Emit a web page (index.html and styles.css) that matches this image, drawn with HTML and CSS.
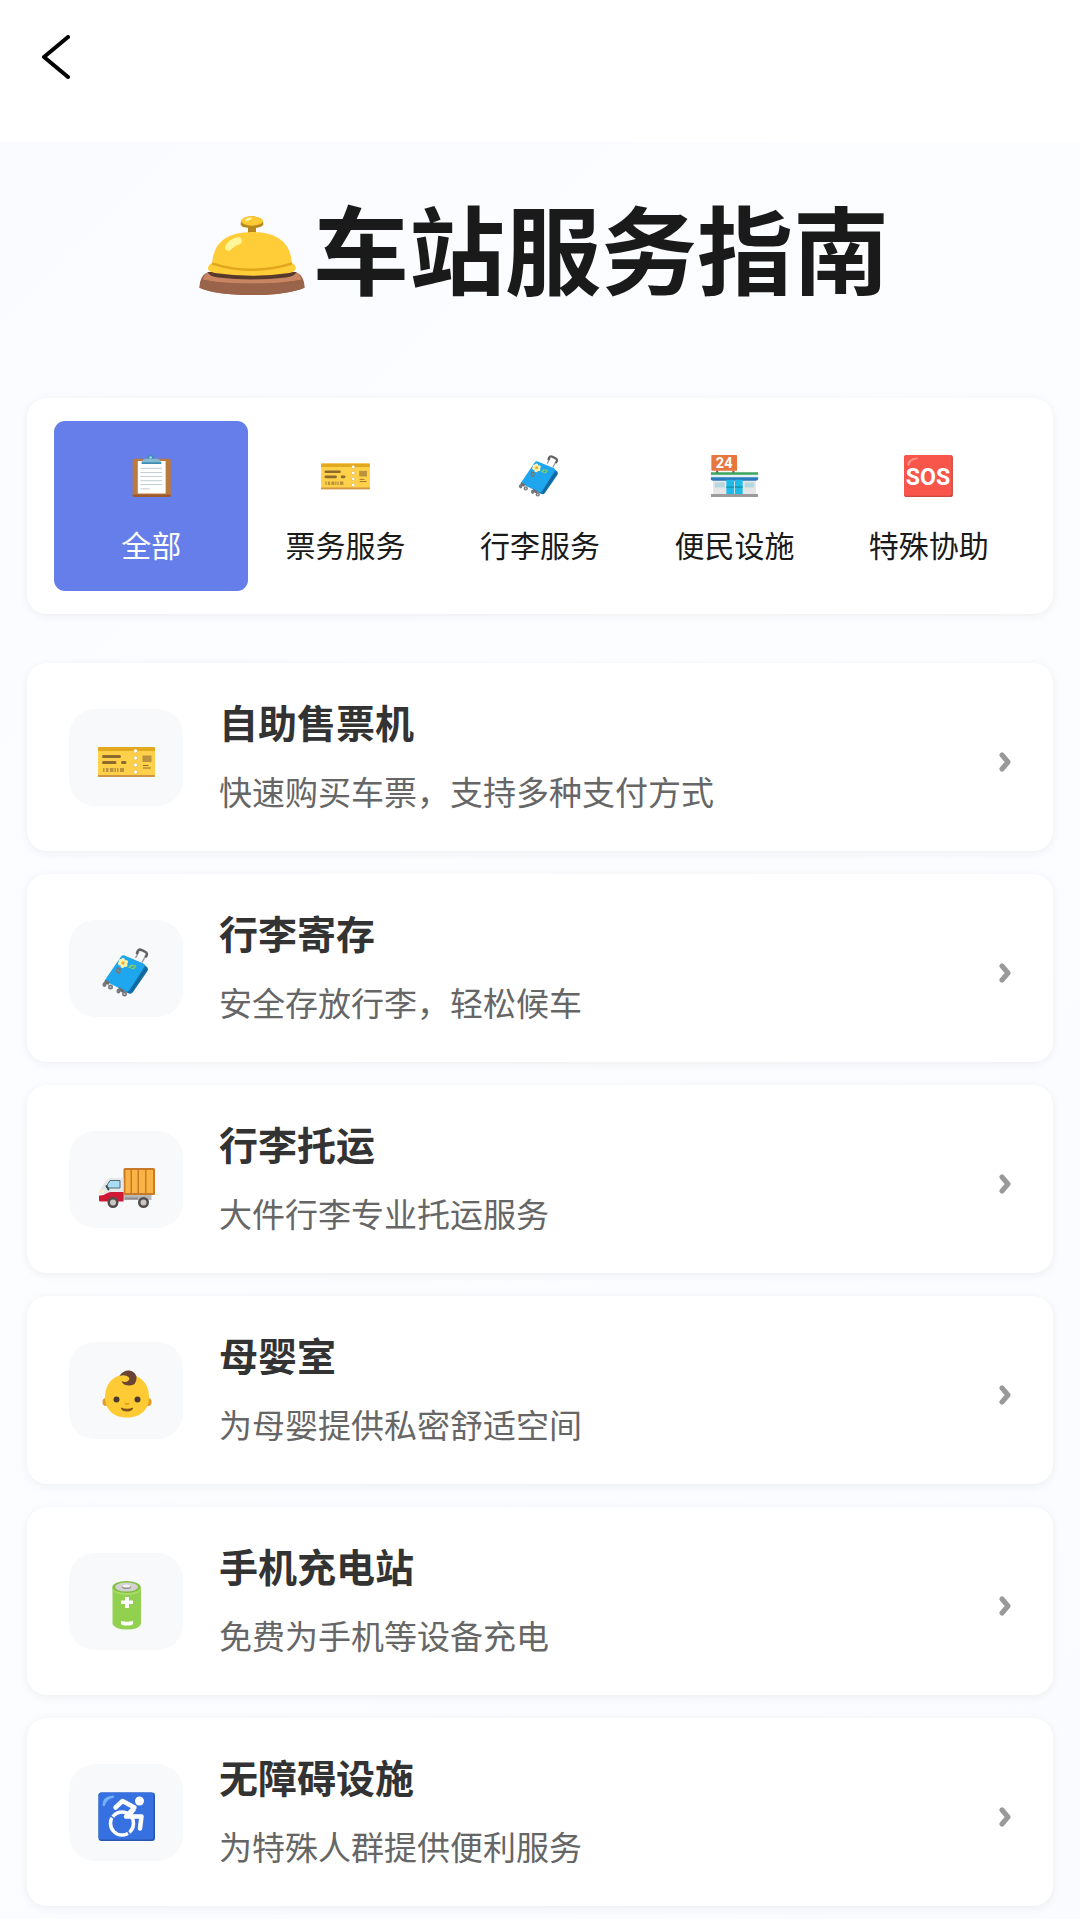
FILE: index.html
```html
<!DOCTYPE html>
<html lang="zh-CN">
<head>
    <meta charset="UTF-8">
    <meta name="viewport" content="width=device-width, initial-scale=1.0">
    <title>车站服务指南</title>
    <link rel="stylesheet" href="styles.css">
</head>
<body>
    <!-- shared icons -->
    <svg class="sprite" aria-hidden="true">
        <symbol id="ticket" viewBox="0 0 114 98">
            <rect x="0" y="20" width="114" height="60" rx="2" fill="#ffd04a"/>
            <path d="M0 22q0-2 2-2h110q2 0 2 2v6H0z" fill="#e2a91f"/>
            <path d="M0 76h114v2q0 2-2 2H2q-2 0-2-2z" fill="#cf9544"/>
            <path d="M11 39h32M11 51h23M49 51h5" stroke="#8b6a2b" stroke-width="6" stroke-linecap="round"/>
            <path d="M10 66h3M16 66h5M24 66h7M33 66h3M38 66h3M44 66h8" stroke="#b8923c" stroke-width="8"/>
            <path d="M89 37h18v13H89z" fill="#b8923c"/>
            <path d="M90 57h11M90 62h16" stroke="#8b6a2b" stroke-width="2"/>
            <g fill="#fff" stroke="#d39a3a" stroke-width="1">
                <circle cx="75" cy="28" r="4"/>
                <circle cx="75" cy="42" r="4"/>
                <circle cx="75" cy="56" r="4"/>
                <circle cx="75" cy="70" r="4"/>
            </g>
        </symbol>
        <symbol id="luggage" viewBox="0 0 114 98">
            <path d="M75 20l7-13M88 29l8-15" stroke="#9a9a9a" stroke-width="3"/>
            <path d="M78 10q2-9 9-6l8 4q5 3 1 9" fill="none" stroke="#616161" stroke-width="5" stroke-linecap="round"/>
            <path d="M92 33l7 6q2 3 0 7L70 88q-3 5-8 3l-10-4z" fill="#1472ab"/>
            <path d="M96 42L66 87" stroke="#0d5a8c" stroke-width="2"/>
            <path d="M46 17q3-4 7-2l38 16q4 2 2 6L63 84q-3 5-8 3L18 68q-5-2-2-7z" fill="#1ea7ef"/>
            <path d="M14 63l10 5-3 6-9-4zM42 78l11 6-1 7-11-6z" fill="#6d6e72"/>
            <g fill="#77787c">
                <ellipse cx="13" cy="73" rx="4" ry="5"/>
                <circle cx="25" cy="78" r="5"/>
                <ellipse cx="41" cy="86" rx="4" ry="5"/>
                <circle cx="53" cy="92" r="5"/>
            </g>
            <circle cx="25" cy="78" r="2" fill="#c5c5c5"/>
            <circle cx="53" cy="92" r="2" fill="#c5c5c5"/>
            <g fill="#fff2a6">
                <circle cx="50" cy="24" r="4"/>
                <circle cx="56" cy="28" r="4"/>
                <circle cx="55" cy="34" r="4"/>
                <circle cx="49" cy="36" r="4"/>
                <circle cx="44" cy="31" r="4"/>
                <circle cx="45" cy="26" r="4"/>
            </g>
            <circle cx="50" cy="30" r="3" fill="#f2a62b"/>
            <path d="M60 39l6-6 11 2-5 8z" fill="#7fcf64"/>
            <path d="M65 39l4-3 4 1-3 3z" fill="#2b9fce"/>
            <path d="M38 38l7 2v9l-4 3-5-5z" fill="#8d6e63"/>
            <circle cx="41" cy="45" r="2" fill="#4bb5d8"/>
        </symbol>
        <symbol id="chevron" viewBox="0 0 12 20">
            <path d="M3 3l6 7-6 7" fill="none" stroke="#999" stroke-width="5" stroke-linecap="round" stroke-linejoin="round"/>
        </symbol>
    </svg>

    <header class="navbar">
        <button class="back" type="button" aria-label="返回">
            <svg viewBox="0 0 28 44" aria-hidden="true">
                <path d="M26 2L2 22l24 20" fill="none" stroke="#000" stroke-width="4" stroke-linecap="round" stroke-linejoin="round"/>
            </svg>
        </button>
    </header>

    <main class="container">
        <h1 class="title">
            <svg class="bell" viewBox="57 77 318 238" aria-hidden="true">
                <path d="M57 293q2-36 24-46h270q22 10 24 46-50 22-159 22T57 293z" fill="#99644a"/>
                <path d="M68 268q5-16 16-21h264q12 5 17 21-50 13-148 13T68 268z" fill="#c98563"/>
                <path d="M64 275q10-8 22-3 50 8 130 8t131-8q12-5 21 3l4 18q-50 22-156 22T59 293z" fill="#99644a"/>
                <path d="M82 246q6 14 32 16 100 12 204 0 26-2 32-16z" fill="#583a2c"/>
                <path d="M204 107h24v22h-24z" fill="#b8871b"/>
                <path d="M182 98q2-20 34-20t34 20v5q-5 10-34 10t-34-10z" fill="#b8871b"/>
                <ellipse cx="216" cy="92" rx="33" ry="14" fill="#fdca33"/>
                <ellipse cx="205" cy="87" rx="11" ry="4" fill="#fff3a0" transform="rotate(-20 205 87)"/>
                <path d="M96 218q6-93 120-93t120 93q12 6 12 19-5 10-20 12-112 16-224 0-17-3-21-12 1-13 13-19z" fill="#ffcd38"/>
                <path d="M96 216q118 38 240 0l1 8q-120 38-242 0z" fill="#e2a61d"/>
                <path d="M136 177q-4-10 8-21 16-16 34-15 9 3 7 15-2 6-13 8-10 4-17 12-9 11-19 1z" fill="#fff59a"/>
            </svg>
            <span>车站服务指南</span>
        </h1>

        <nav class="categories">
            <button class="category active" type="button">
                <svg class="category-icon" viewBox="0 0 114 98" aria-hidden="true">
                    <rect x="13" y="9" width="89" height="89" rx="4" fill="#ba793e"/>
                    <path d="M13 92h89v2q0 4-4 4H17q-4 0-4-4z" fill="#9a5b2e"/>
                    <path d="M25 14h65v76H25z" fill="#fff"/>
                    <path d="M31 31h51M31 41h51M31 50h51M31 60h51M31 69h51M31 79h22" stroke="#b8c3c9" stroke-width="2"/>
                    <path d="M46 11q2-10 9-11 8 1 10 11z" fill="#3d8fb0"/>
                    <circle cx="55" cy="6" r="3" fill="#a6d4e6"/>
                    <path d="M34 20q0-10 9-11h26q10 1 11 11z" fill="#82bad3"/>
                    <path d="M34 17h46v4H34z" fill="#3d8fb0"/>
                </svg>
                <span>全部</span>
            </button>
            <button class="category" type="button">
                <svg class="category-icon" aria-hidden="true"><use href="#ticket"/></svg>
                <span>票务服务</span>
            </button>
            <button class="category" type="button">
                <svg class="category-icon" aria-hidden="true"><use href="#luggage"/></svg>
                <span>行李服务</span>
            </button>
            <button class="category" type="button">
                <svg class="category-icon" viewBox="0 0 114 98" aria-hidden="true">
                    <path d="M14 36h5v6h-5zM52 36h5v6h-5z" fill="#7a5a4c"/>
                    <rect x="3" y="0" width="60" height="37" rx="2" fill="#e8763f"/>
                    <text class="store-text" x="33" y="31" text-anchor="middle">24</text>
                    <path d="M7 56h100v36H7z" fill="#e4e6e8"/>
                    <path d="M2 40h110v7H2z" fill="#3da45f"/>
                    <path d="M2 46h110v7H2z" fill="#e3f2f5"/>
                    <path d="M2 52h110v6q-3 2-6 2H8q-4 0-6-2z" fill="#2b7bbd"/>
                    <path d="M11 64h23v12H11zM81 64h22v12H81z" fill="#b5d7df"/>
                    <path d="M38 58h18v34H38zM58 58h18v34H58z" fill="#1fbbe8"/>
                    <path d="M38 73h18v4H38zM58 73h18v4H58z" fill="#159cb5"/>
                    <path d="M2 91h110v7H2z" fill="#9b9b9b"/>
                </svg>
                <span>便民设施</span>
            </button>
            <button class="category" type="button">
                <svg class="category-icon" viewBox="0 0 114 98" aria-hidden="true">
                    <rect width="114" height="98" rx="6" fill="#c94a43"/>
                    <rect width="111" height="95" rx="5" fill="#f8554b"/>
                    <path d="M8 22Q9 7 32 6q2 3-2 4-15 2-18 14-4 2-4-2z" fill="#ff9188"/>
                    <text class="sos-text" x="56" y="70" text-anchor="middle">SOS</text>
                </svg>
                <span>特殊协助</span>
            </button>
        </nav>

        <div class="services">
            <a class="service" href="#">
                <span class="service-icon"><svg aria-hidden="true"><use href="#ticket"/></svg></span>
                <span class="service-info">
                    <strong>自助售票机</strong>
                    <span>快速购买车票，支持多种支付方式</span>
                </span>
                <svg class="arrow" aria-hidden="true"><use href="#chevron"/></svg>
            </a>
            <a class="service" href="#">
                <span class="service-icon"><svg aria-hidden="true"><use href="#luggage"/></svg></span>
                <span class="service-info">
                    <strong>行李寄存</strong>
                    <span>安全存放行李，轻松候车</span>
                </span>
                <svg class="arrow" aria-hidden="true"><use href="#chevron"/></svg>
            </a>
            <a class="service" href="#">
                <span class="service-icon">
                    <svg viewBox="0 0 114 98" aria-hidden="true">
                        <path d="M48 70h59v12H48z" fill="#b7b7b7"/>
                        <path d="M54 77h26v4H54z" fill="#8c8c8c"/>
                        <rect x="51" y="18" width="63" height="54" rx="3" fill="#c97a27"/>
                        <path d="M55 22h10v46H55zM68 22h11v46H68zM82 22h12v46H82zM97 22h13v46H97z" fill="#fab446"/>
                        <path d="M2 66l7-13 9-12q2-3 6-3h27v32H2z" fill="#e5e8ea"/>
                        <path d="M2 73q8 1 15-4 4-3 9-3h25v19H5q-3 0-3-3z" fill="#cf1736"/>
                        <path d="M16 56l8-13h20v15H18z" fill="#a9ddf5" stroke="#566a75" stroke-width="2" stroke-linejoin="round"/>
                        <path d="M17 54l4 7" stroke="#44525a" stroke-width="4" stroke-linecap="round"/>
                        <path d="M5 62h7v6H4z" fill="#fff0bc"/>
                        <circle cx="30" cy="87" r="11" fill="#514d4b"/>
                        <circle cx="91" cy="87" r="11" fill="#514d4b"/>
                        <circle cx="30" cy="87" r="6" fill="#c9c5bf"/>
                        <circle cx="91" cy="87" r="6" fill="#c9c5bf"/>
                    </svg>
                </span>
                <span class="service-info">
                    <strong>行李托运</strong>
                    <span>大件行李专业托运服务</span>
                </span>
                <svg class="arrow" aria-hidden="true"><use href="#chevron"/></svg>
            </a>
            <a class="service" href="#">
                <span class="service-icon">
                    <svg viewBox="0 0 114 98" aria-hidden="true">
                        <ellipse cx="16" cy="64" rx="7" ry="8" fill="#e39b26"/>
                        <ellipse cx="100" cy="64" rx="7" ry="8" fill="#e39b26"/>
                        <path d="M58 9c28 0 44 19 44 46 0 25-18 40-44 40S14 80 14 55C14 28 30 9 58 9z" fill="#fecb34"/>
                        <path d="M43 12q7-12 20-11 14 3 14 16 0 13-14 14-13 0-16-9 8 4 13 0 5-4 1-8-7-6-18-2z" fill="#6a4536"/>
                        <ellipse cx="37" cy="59" rx="6" ry="6" fill="#4c3a31"/>
                        <ellipse cx="79" cy="59" rx="6" ry="6" fill="#4c3a31"/>
                        <path d="M53 65q5 2 10 0 0 5-5 5t-5-5z" fill="#e39b26"/>
                        <path d="M46 75q12 5 24 0 1 3-3 6-9 4-18 0-4-3-3-6z" fill="#805020"/>
                    </svg>
                </span>
                <span class="service-info">
                    <strong>母婴室</strong>
                    <span>为母婴提供私密舒适空间</span>
                </span>
                <svg class="arrow" aria-hidden="true"><use href="#chevron"/></svg>
            </a>
            <a class="service" href="#">
                <span class="service-icon">
                    <svg viewBox="0 0 114 98" aria-hidden="true">
                        <path d="M29 12h57v74q-4 11-28 11T29 86z" fill="#92d050"/>
                        <path d="M29 12h57v6q-6 10-28 10T29 18z" fill="#a8dc68"/>
                        <ellipse cx="57" cy="12" rx="28" ry="12" fill="#81bf3f"/>
                        <ellipse cx="57" cy="12" rx="23" ry="9" fill="#d2d2d2"/>
                        <ellipse cx="57" cy="12" rx="9" ry="4" fill="#929292"/>
                        <ellipse cx="57" cy="10" rx="8" ry="3" fill="#f2f2f2"/>
                        <path d="M54 32h8v7h8v7h-8v8h-8v-8h-8v-7h8z" fill="#fff"/>
                        <path d="M46 80q12 3 24 0v6q-2 3-12 3t-12-3z" fill="#fff"/>
                    </svg>
                </span>
                <span class="service-info">
                    <strong>手机充电站</strong>
                    <span>免费为手机等设备充电</span>
                </span>
                <svg class="arrow" aria-hidden="true"><use href="#chevron"/></svg>
            </a>
            <a class="service" href="#">
                <span class="service-icon">
                    <svg viewBox="0 0 114 98" aria-hidden="true">
                        <rect x="1" y="1" width="113" height="97" rx="6" fill="#2757af"/>
                        <rect x="1" y="1" width="110" height="94" rx="5" fill="#3670e1"/>
                        <path d="M9 24Q9 8 32 7q2 3-2 5-13 2-16 15-5 3-5-3z" fill="#76b1f6"/>
                        <circle cx="83" cy="18" r="9" fill="#fff"/>
                        <path d="M35 31l14-13 24 13-17 18h31l-3 24" fill="none" stroke="#fff" stroke-width="9" stroke-linecap="round" stroke-linejoin="round"/>
                        <path d="M56 49l8-14 12 1-10 13z" fill="#fff"/>
                        <circle cx="48" cy="63" r="23" fill="none" stroke="#fff" stroke-width="7"/>
                        <path d="M24 47l12 9M59 78l7 12" stroke="#3670e1" stroke-width="3"/>
                    </svg>
                </span>
                <span class="service-info">
                    <strong>无障碍设施</strong>
                    <span>为特殊人群提供便利服务</span>
                </span>
                <svg class="arrow" aria-hidden="true"><use href="#chevron"/></svg>
            </a>
        </div>
    </main>
</body>
</html>
```
FILE: styles.css
```css
* { box-sizing: border-box; }
body { margin: 0; background: #fff; color: #1a1a1a; font-family: 'Noto Sans CJK SC', sans-serif; }
button { border: none; background: none; padding: 0; color: inherit; font-family: inherit; cursor: pointer; }
svg { display: block; flex-shrink: 0; }
.sprite { position: absolute; width: 0; height: 0; }

.navbar { height: 142px; padding: 35px 42px; }
.back svg { width: 28px; height: 44px; }

.container { padding: 49px 27px 13px; background: linear-gradient(135deg, #fafbff, #fcfdff 40%, #fafbfe); }
.title { display: flex; justify-content: center; align-items: center; gap: 8px; margin: 0 0 97px; font-size: 96px; line-height: 110px; font-weight: 700; }
.bell { width: 106px; height: 79px; margin: 18px 0 0 8px; }

.categories { display: grid; grid-template-columns: repeat(5, 1fr); padding: 23px 27px; margin-bottom: 49px; background: #fff; border-radius: 20px; box-shadow: 0 2px 10px rgba(0, 0, 0, 0.06); }
.category { display: flex; flex-direction: column; align-items: center; gap: 25px; padding: 34px 0 25px; border-radius: 11px; font-size: 30px; line-height: 44px; }
.category.active { background: #667eea; color: #fff; }
.category-icon { width: 49px; height: 42px; overflow: visible; }
.store-text { fill: #fff; font: 700 34px Roboto, sans-serif; }
.sos-text { fill: #fff; font: 700 54px Roboto, sans-serif; }

.services { display: flex; flex-direction: column; gap: 23px; }
.service { display: flex; align-items: center; min-height: 188px; padding: 0 42px; background: #fff; border-radius: 20px; box-shadow: 0 2px 10px rgba(0, 0, 0, 0.06); color: #333; text-decoration: none; }
.service-icon { display: flex; justify-content: center; align-items: center; width: 114px; height: 97px; padding-top: 8px; margin-right: 36px; border-radius: 26px; background: #f8f9fb; }
.service-icon svg { width: 57px; height: 49px; }
.service-info { flex: 1; display: flex; flex-direction: column; gap: 20px; padding-bottom: 7px; }
.service-info strong { font-size: 39px; line-height: 54px; font-weight: 700; }
.service-info span { font-size: 33px; line-height: 46px; color: #666; }
.arrow { width: 12px; height: 20px; margin-top: 10px; }
```
